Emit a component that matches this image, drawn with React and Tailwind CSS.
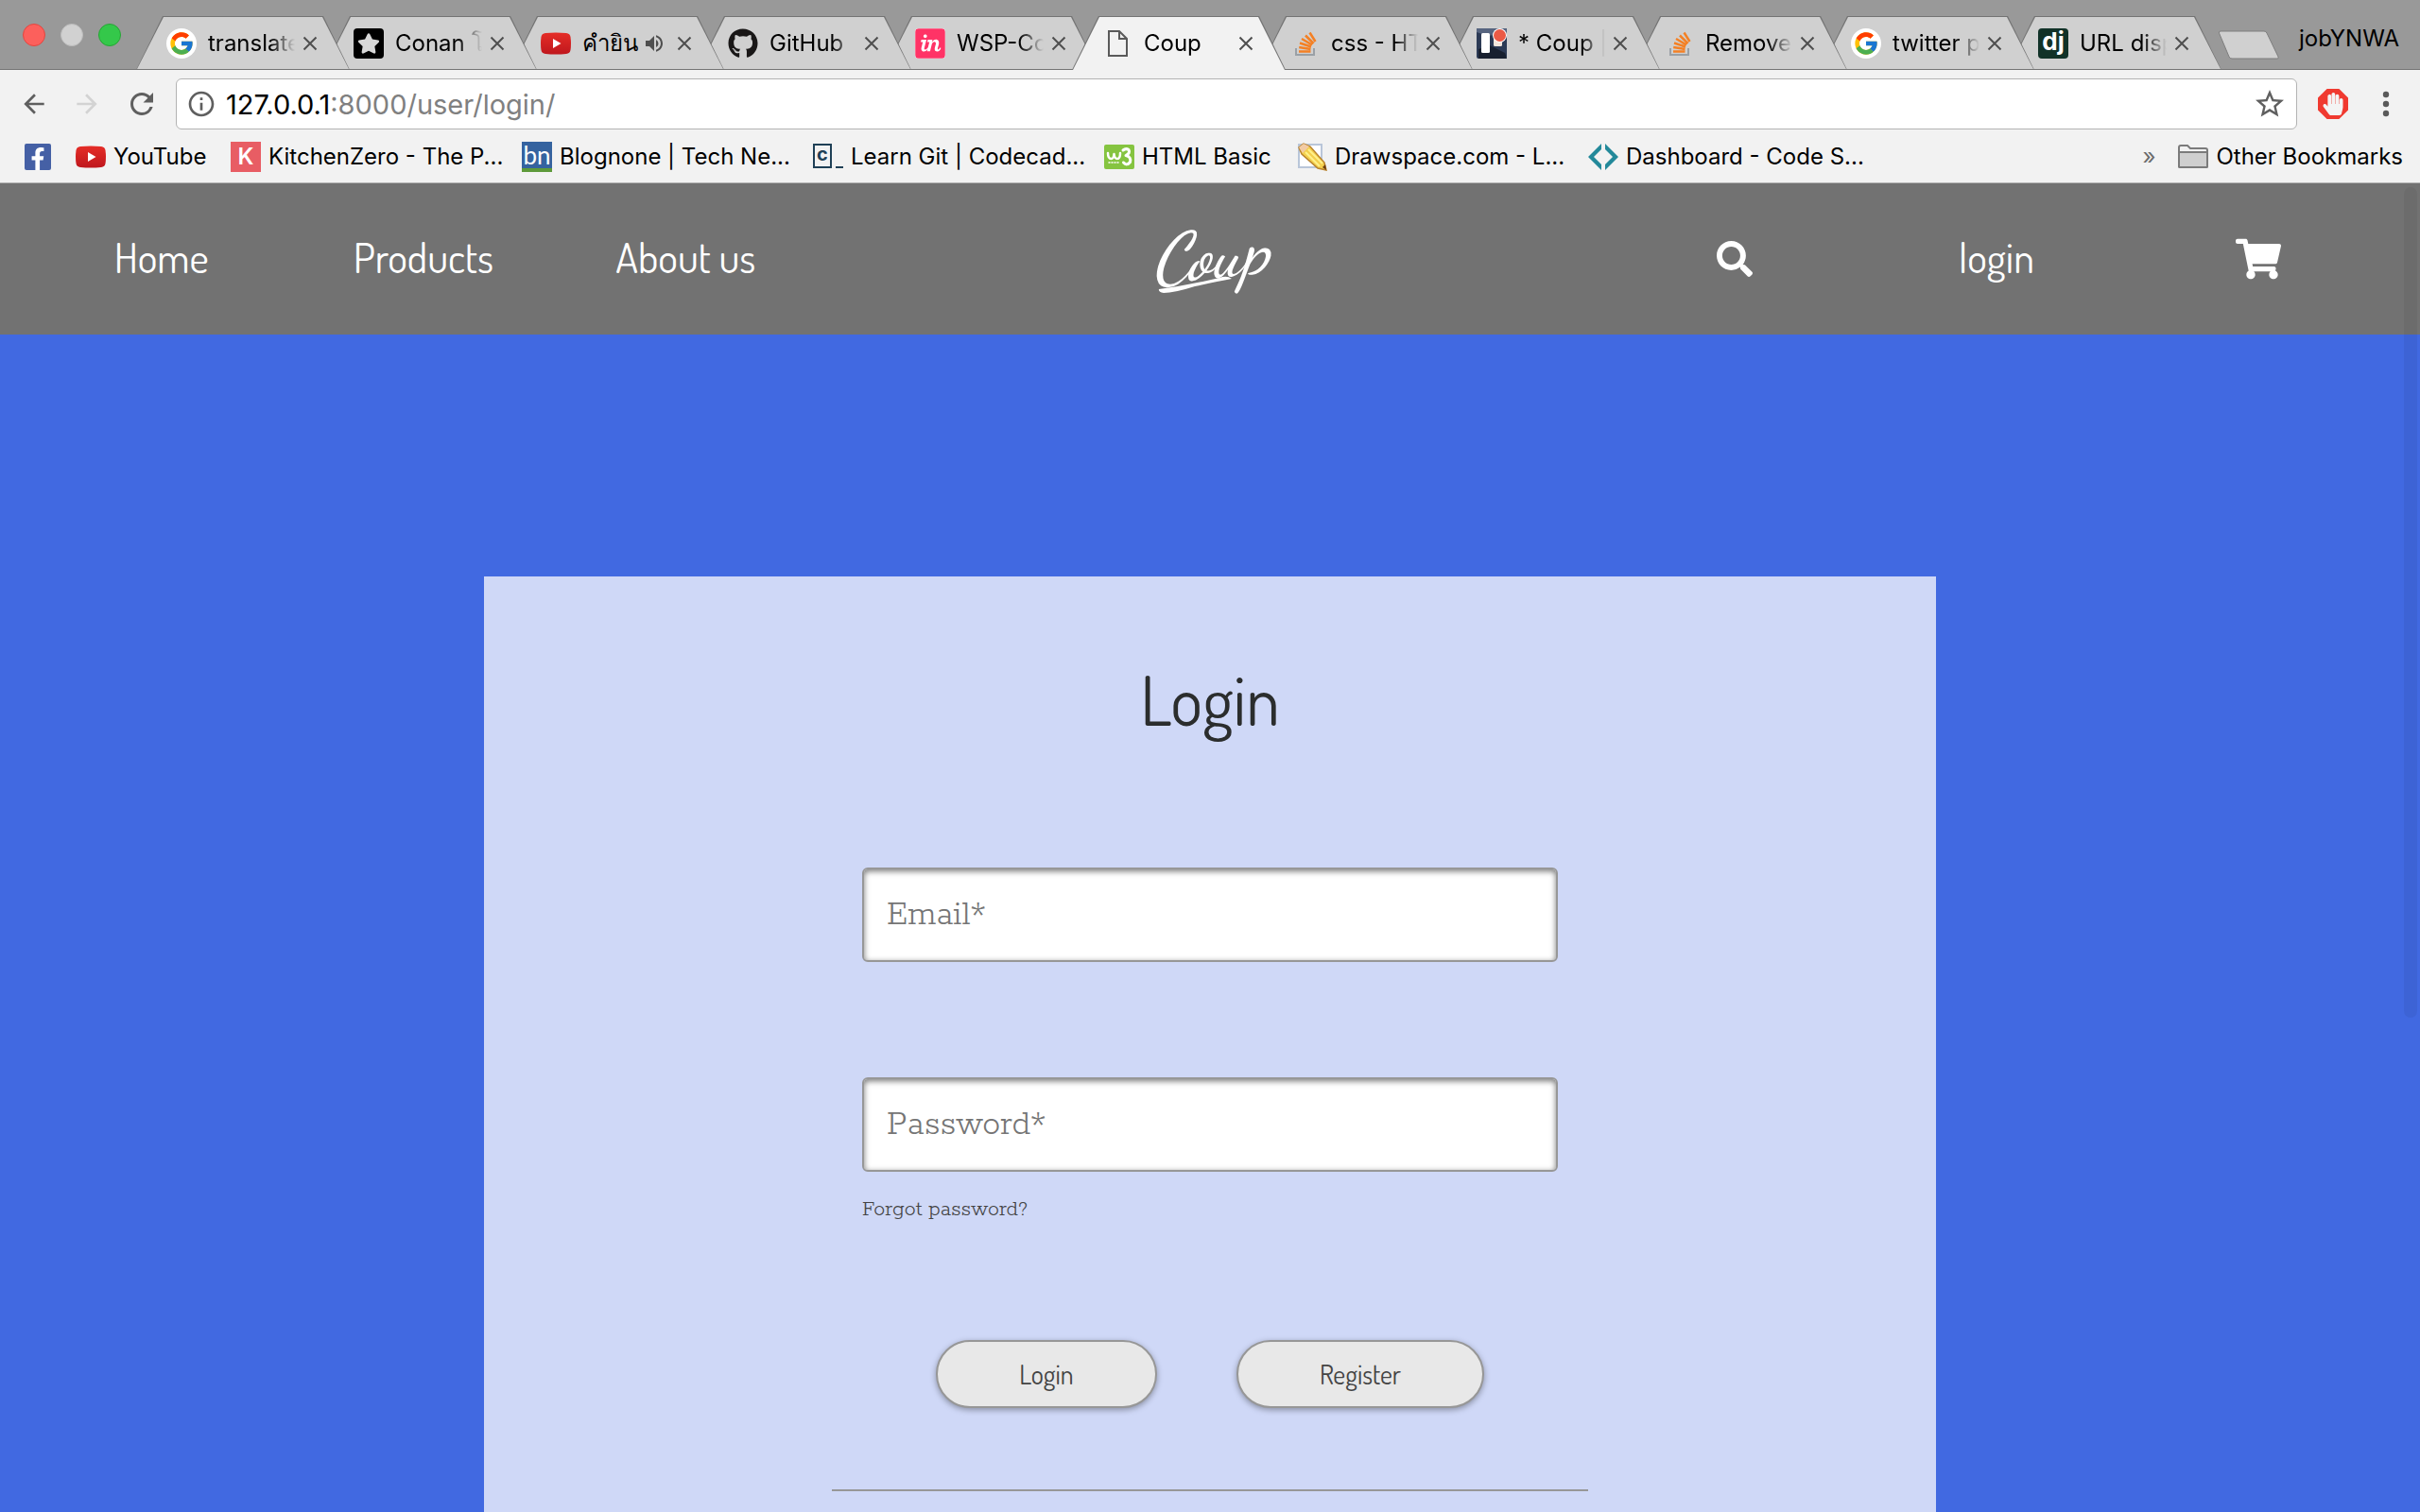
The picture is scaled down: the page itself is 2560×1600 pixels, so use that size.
import React from "react";
import { FcGoogle } from "react-icons/fc";
import { FaFacebookF, FaGithub, FaHandPaper, FaInvision, FaSearch, FaShoppingCart, FaStar } from "react-icons/fa";
import { MdArrowBack, MdArrowForward, MdInfoOutline, MdRefresh, MdStarBorder, MdVolumeUp } from "react-icons/md";

const GoogleIcon = () => (
  <span className="flex size-8 items-center justify-center rounded-full bg-white">
    <FcGoogle className="size-7" />
  </span>
);

const ConanIcon = () => (
  <span className="flex size-8 items-center justify-center rounded-sm bg-black">
    <FaStar className="size-6 text-[#d8d8d8]" />
  </span>
);

const YouTubeIcon = () => (
  <svg viewBox="0 0 32 32" className="size-8" aria-hidden="true">
    <defs>
      <linearGradient id="yt" x1="0" y1="0" x2="0" y2="1">
        <stop offset="0" stopColor="#e52d27" />
        <stop offset="1" stopColor="#bf171d" />
      </linearGradient>
    </defs>
    <path d="M5 5Q16 4 27 5Q31 5.500 31.500 9Q32.500 16 31.500 23Q31 26.500 27 27Q16 28 5 27Q1 26.500 .5 23Q-.5 16 .5 9Q1 5.500 5 5Z" fill="url(#yt)" />
    <path d="M13 11L21.500 16L13 21Z" fill="#fff" />
  </svg>
);

const InvisionIcon = () => (
  <span className="flex size-8 items-center justify-center overflow-hidden rounded-sm bg-white">
    <FaInvision className="size-9 shrink-0 text-[#ff3366]" />
  </span>
);

const FileIcon = () => (
  <svg viewBox="0 0 32 32" className="size-8" fill="none" stroke="#5a5a5a" strokeWidth="2" aria-hidden="true">
    <path d="M7 3H18L26 11V29H7Z" />
    <path d="M18 3V11H26" />
  </svg>
);

const StackIcon = () => (
  <svg viewBox="0 0 32 32" className="size-8" fill="none" strokeWidth="2" aria-hidden="true">
    <path d="M7 21V28H26V21" stroke="#9aa0a6" />
    <path d="M10 24.500H22.500M10.200 20L22.500 22M11 15.500L23 19.500M13 11L24 17.500M17 7.500L25.500 16M21.500 4.500L27.500 14" stroke="#f48024" strokeWidth="2.500" />
  </svg>
);

const TrelloIcon = () => (
  <svg viewBox="0 0 32 32" className="size-8" aria-hidden="true">
    <rect width="32" height="32" rx="2" fill="#2c3a55" />
    <path d="M0 4L12 8L32 5V0H0Z" fill="#56647f" />
    <path d="M2 22L14 18L30 26L32 32H2Z" fill="#18202f" />
    <rect x="5" y="5" width="9" height="21" rx="1.500" fill="#fff" />
    <rect x="18" y="5" width="9" height="14" rx="1.500" fill="#f4e6dc" />
    <circle cx="24.500" cy="7.500" r="7.500" fill="#fff" />
    <circle cx="24.500" cy="7.500" r="6.500" fill="#eb5a46" />
  </svg>
);

const DjangoIcon = () => (
  <span className="flex size-8 items-center justify-center rounded-sm bg-[#113228] pb-1 text-[26px] leading-none font-bold text-white">dj</span>
);

const FacebookIcon = () => (
  <span className="flex size-7 items-end justify-end overflow-hidden rounded-xs bg-[#4560a5] pr-0.5">
    <FaFacebookF className="size-6 text-white" />
  </span>
);

const KitchenIcon = () => (
  <span className="flex size-8 items-center justify-center bg-[#e85d64] text-2xl leading-none font-semibold text-white">K</span>
);

const BlognoneIcon = () => (
  <span className="flex size-8 items-center justify-center border-b-4 border-[#5e9a3a] bg-[#35639f] font-['Lato',sans-serif] text-[26px] leading-none text-white">bn</span>
);

const CodecademyIcon = () => (
  <span className="flex size-8 items-end gap-1 pb-1">
    <span className="flex h-[26px] w-5 items-center justify-center border-2 border-[#1f4056] pb-1 text-xl leading-none font-bold text-[#1f4056]">c</span>
    <span className="h-0.5 w-2 bg-[#1f4056]" />
  </span>
);

const W3Icon = () => (
  <svg viewBox="0 0 32 32" className="size-8" fill="none" stroke="#fff" strokeLinecap="round" strokeLinejoin="round" aria-hidden="true">
    <rect y="3" width="32" height="26" rx="2" fill="#85c440" stroke="none" />
    <path d="M4 12Q4 18 7.500 18Q10 18 10.500 13Q11 18 14 18Q17 18 17 12" strokeWidth="2.500" />
    <path d="M20 9Q23 6.500 26 8.500Q28 12 23 14.500Q29 16 27.500 21.500Q24 26 20.500 22" strokeWidth="3" />
    <path d="M5 22H17" strokeWidth="1.500" strokeDasharray="1 2" />
  </svg>
);

const PencilIcon = () => (
  <svg viewBox="0 0 32 32" className="size-8" aria-hidden="true">
    <path d="M2 3H26V27H2Z" fill="#fff" stroke="#b9c6d9" strokeWidth="2" />
    <path d="M2 6L7 2L14 5L29 22L31 30L22 28L5 13Z" fill="#f3cf4d" stroke="#b9822c" strokeWidth="1.500" />
    <path d="M2 6L7 2L13 5L6 12Z" fill="#f2cba4" />
    <path d="M9 11L24 26M12 8L27 23" stroke="#fff08a" strokeWidth="2" />
    <path d="M27 27L31 30L30 24Z" fill="#6b3c10" />
  </svg>
);

const DashboardIcon = () => (
  <svg viewBox="0 0 32 32" className="size-8" fill="#23899a" aria-hidden="true">
    <path d="M14 2V8L6 16L14 24V30L0 16Z" />
    <path d="M18 2V8L26 16L18 24V30L32 16Z" />
  </svg>
);

const FolderIcon = () => (
  <svg viewBox="0 0 32 32" className="size-8" fill="#cfcfcf" stroke="#7b7b7b" strokeWidth="2" aria-hidden="true">
    <path d="M1 26V6Q1 4 3 4H10L13 7H29Q31 7 31 9V26Q31 27 30 27H2Q1 27 1 26Z" fill="#f2f2f2" />
    <path d="M1 11H31V26Q31 27 30 27H2Q1 27 1 26Z" />
  </svg>
);

const CloseIcon = () => (
  <svg viewBox="0 0 16 16" className="size-4" stroke="#4f4f4f" strokeWidth="2" aria-hidden="true">
    <path d="M1.500 1.500L14.500 14.500M14.500 1.500L1.500 14.500" />
  </svg>
);

const tabs = [
  { title: "translate", Icon: GoogleIcon, z: "z-[11]" },
  { title: "Conan โคนัน", Icon: ConanIcon, z: "z-10" },
  { title: "คำยิน", Icon: YouTubeIcon, z: "z-[9]", audio: true },
  { title: "GitHub", Icon: () => <FaGithub className="size-8 text-[#191717]" />, z: "z-[8]" },
  { title: "WSP-Coup", Icon: InvisionIcon, z: "z-[7]" },
  { title: "Coup", Icon: FileIcon, z: "z-20", active: true },
  { title: "css - HTML", Icon: StackIcon, z: "z-[5]" },
  { title: "* Coup | Trello", Icon: TrelloIcon, z: "z-[4]" },
  { title: "Remove", Icon: StackIcon, z: "z-[3]" },
  { title: "twitter plugin", Icon: GoogleIcon, z: "z-[2]" },
  { title: "URL dispatcher", Icon: DjangoIcon, z: "z-[1]" },
];

const bookmarks = [
  { title: "YouTube", Icon: YouTubeIcon, width: "w-27" },
  { title: "KitchenZero - The P...", Icon: KitchenIcon, width: "w-63" },
  { title: "Blognone | Tech Ne...", Icon: BlognoneIcon, width: "w-63" },
  { title: "Learn Git | Codecad...", Icon: CodecademyIcon, width: "w-63" },
  { title: "HTML Basic", Icon: W3Icon, width: "w-37" },
  { title: "Drawspace.com - L...", Icon: PencilIcon, width: "w-63" },
  { title: "Dashboard - Code S...", Icon: DashboardIcon, width: "w-63" },
];

function Tab({ title, Icon, z, active, audio }) {
  const shape = "absolute inset-x-0 [clip-path:polygon(0_100%,28px_0,calc(100%-28px)_0,100%_100%)]";
  return (
    <div className={`relative -ml-7 flex h-[57px] min-w-0 flex-[0_1_226px] items-center pr-[34px] pl-8 first:ml-0 ${z}`}>
      <span className={`${shape} inset-y-0 bg-[#747474]`} />
      <span className={`${shape} mx-px top-px ${active ? "bottom-0 bg-[#f2f2f2]" : "bottom-px bg-[#d0d0d0]"}`} />
      <button type="button" className="relative flex min-w-0 flex-1 items-center gap-3 text-left">
        <span className="shrink-0"><Icon /></span>
        <span className={`min-w-0 flex-1 overflow-hidden whitespace-nowrap ${audio ? "" : "[mask-image:linear-gradient(to_right,black_72%,transparent)]"}`}>{title}</span>
      </button>
      {audio && <MdVolumeUp className="relative mr-1 size-6 shrink-0 text-[#4f4f4f]" aria-label="Playing audio" />}
      <button type="button" aria-label={`Close ${title}`} className="relative ml-2 shrink-0"><CloseIcon /></button>
    </div>
  );
}

function BrowserChrome() {
  return (
    <header className="font-['Inter','Noto_Sans',sans-serif] text-2xl text-black">
      <div className="flex h-[74px] items-end border-b border-[#747474] bg-[#999999]">
        <div className="flex w-36 shrink-0 gap-4 self-center pl-6">
          <button type="button" aria-label="Close window" className="size-6 rounded-full border border-[#e2463f] bg-[#fc605c]" />
          <button type="button" aria-label="Minimize window" className="size-6 rounded-full border border-[#bcbcbc] bg-[#d1d1d1]" />
          <button type="button" aria-label="Zoom window" className="size-6 rounded-full border border-[#27a535] bg-[#34c84a]" />
        </div>
        <div className="isolate -mb-px flex min-w-0 flex-[0_1_2206px]">
          {tabs.map((tab) => <Tab key={tab.title} {...tab} />)}
        </div>
        <button type="button" aria-label="New tab" className="-ml-1 mb-2.5 shrink-0">
          <svg viewBox="0 0 66 31" className="h-[31px] w-[66px]" aria-hidden="true">
            <path d="M3 1H49Q51 1 52 3L64 28Q65 30 63 30H15Q13 30 12 28L1.500 3Q1 1 3 1Z" fill="#d0d0d0" stroke="#7e7e7e" />
          </svg>
        </button>
        <button type="button" className="mr-[22px] mb-[18px] ml-auto shrink-0 leading-7">jobYNWA</button>
      </div>

      <div className="flex h-[72px] items-center bg-[#f2f2f2] pr-6 text-[#5f5f5f]">
        <div className="flex w-[186px] shrink-0 items-center gap-6 pl-5">
          <button type="button" aria-label="Back"><MdArrowBack className="size-8" /></button>
          <button type="button" aria-label="Forward"><MdArrowForward className="size-8 text-[#d3d3d3]" /></button>
          <button type="button" aria-label="Reload"><MdRefresh className="size-9" /></button>
        </div>
        <div className="relative flex h-[54px] flex-1 items-center rounded-md border border-[#b3b3b3] bg-white pr-2.5 pl-2.5 text-[29px]">
          <MdInfoOutline className="size-8" aria-hidden="true" />
          <div className="relative ml-2.5 flex-1 pt-0.5">
            <input aria-label="Address" defaultValue="127.0.0.1:8000/user/login/" className="w-full bg-transparent text-transparent caret-black outline-none" />
            <span aria-hidden="true" className="pointer-events-none absolute inset-0 pt-0.5 text-[#808080]"><span className="text-black">127.0.0.1</span>:8000/user/login/</span>
          </div>
          <button type="button" aria-label="Bookmark this page"><MdStarBorder className="size-9" /></button>
        </div>
        <button type="button" aria-label="Ad blocker" className="ml-[22px] flex size-8 items-center justify-center bg-[#f03a30] [clip-path:polygon(30%_0,70%_0,100%_30%,100%_70%,70%_100%,30%_100%,0_70%,0_30%)]">
          <FaHandPaper className="size-6 text-[#f4f4f4]" />
        </button>
        <button type="button" aria-label="Menu" className="ml-7 flex w-6 justify-center">
          <svg viewBox="0 0 8 28" className="h-7 w-2" fill="#5a5a5a" aria-hidden="true">
            <circle cx="4" cy="4" r="3.200" /><circle cx="4" cy="14" r="3.200" /><circle cx="4" cy="24" r="3.200" />
          </svg>
        </button>
      </div>

      <nav aria-label="Bookmarks" className="flex h-12 items-center gap-4 overflow-hidden border-b border-[#b4b4b4] bg-[#f2f2f2] pr-[18px] pb-2 pl-[26px]">
        <a href="#facebook" aria-label="Facebook" className="shrink-0"><FacebookIcon /></a>
        <div className="flex min-w-0 flex-1 gap-4 overflow-hidden pl-2.5">
          {bookmarks.map(({ title, Icon, width }) => (
            <a key={title} href="#bookmark" className="flex shrink-0 items-center gap-2">
              <Icon />
              <span className={`overflow-hidden leading-8 whitespace-nowrap ${width}`}>{title}</span>
            </a>
          ))}
        </div>
        <button type="button" aria-label="More bookmarks" className="mr-2 shrink-0 leading-8 text-[#6b6b6b]">»</button>
        <button type="button" className="flex shrink-0 items-center gap-2 leading-8"><FolderIcon />Other Bookmarks</button>
      </nav>
    </header>
  );
}

function Logo() {
  return (
    <a href="#home" className="relative flex h-20 w-32 items-center justify-center">
      <span className="-rotate-6 pb-2 font-['Dancing_Script','Liberation_Serif',serif] text-[72px] leading-none font-semibold italic">Coup</span>
      <svg viewBox="0 0 128 80" className="absolute inset-0" fill="#fff" aria-hidden="true">
        <path d="M10 72Q40 68 74 60Q82 57 87 61Q70 64 48 69Q26 76 15 76Q9 75 10 72Z" />
      </svg>
    </a>
  );
}

function SiteNav() {
  return (
    <nav aria-label="Main" className="grid h-40 grid-cols-9 items-center justify-items-center bg-[#727272] px-8 text-[44px] text-white">
      <a href="#home" className="pb-1">Home</a>
      <a href="#products" className="pb-1">Products</a>
      <a href="#about" className="pb-1 whitespace-nowrap">About us</a>
      <div className="col-start-5"><Logo /></div>
      <button type="button" aria-label="Search" className="col-start-7"><FaSearch className="size-[38px]" /></button>
      <a href="#login" className="pb-1">login</a>
      <a href="#cart" aria-label="Cart"><FaShoppingCart className="size-12" /></a>
    </nav>
  );
}

const fieldClass = "block h-25 w-full rounded-md border-2 border-[#979797] bg-white px-6 font-['Rokkitt','Liberation_Serif',serif] text-[38px] font-light text-[#333] shadow-[inset_0_2px_6px_#777] outline-none placeholder:text-[#757575]";
const buttonClass = "h-[72px] rounded-full border-2 border-[#979797] bg-[#e8e8e8] text-[28px] text-[#444] shadow-[0_2px_6px_rgba(0,0,0,0.35)]";

function LoginCard() {
  return (
    <section className="mx-auto mt-64 w-3/5 flex-1 bg-[#cfd8f7] pt-[90px]">
      <form className="mx-auto w-full max-w-[800px]" onSubmit={(e) => e.preventDefault()}>
        <h1 className="text-center text-[72px] leading-20 text-[#2b2d2d]">Login</h1>
        <div className="px-8 pt-[138px]">
          <input type="email" aria-label="Email" placeholder="Email*" className={fieldClass} />
          <input type="password" aria-label="Password" placeholder="Password*" className={`mt-[122px] ${fieldClass}`} />
          <a href="#forgot" className="mt-6 inline-block font-['Rokkitt','Liberation_Serif',serif] text-2xl leading-8 font-light text-[#444]">Forgot password?</a>
        </div>
        <div className="flex justify-center gap-[84px] pt-[122px] pb-[86px]">
          <button type="submit" className={`w-[234px] ${buttonClass}`}>Login</button>
          <button type="button" className={`w-[262px] ${buttonClass}`}>Register</button>
        </div>
        <hr className="border-t-2 border-[#979797]" />
      </form>
    </section>
  );
}

export default function App() {
  return (
    <div className="flex h-screen flex-col overflow-hidden bg-[#4169e1]">
      <BrowserChrome />
      <main className="relative flex flex-1 flex-col font-['Dosis','Roboto_Condensed','Roboto',sans-serif]">
        <SiteNav />
        <LoginCard />
        <div className="absolute top-1 right-[3px] h-5/8 w-3.5 rounded-full bg-black/5" />
      </main>
    </div>
  );
}
